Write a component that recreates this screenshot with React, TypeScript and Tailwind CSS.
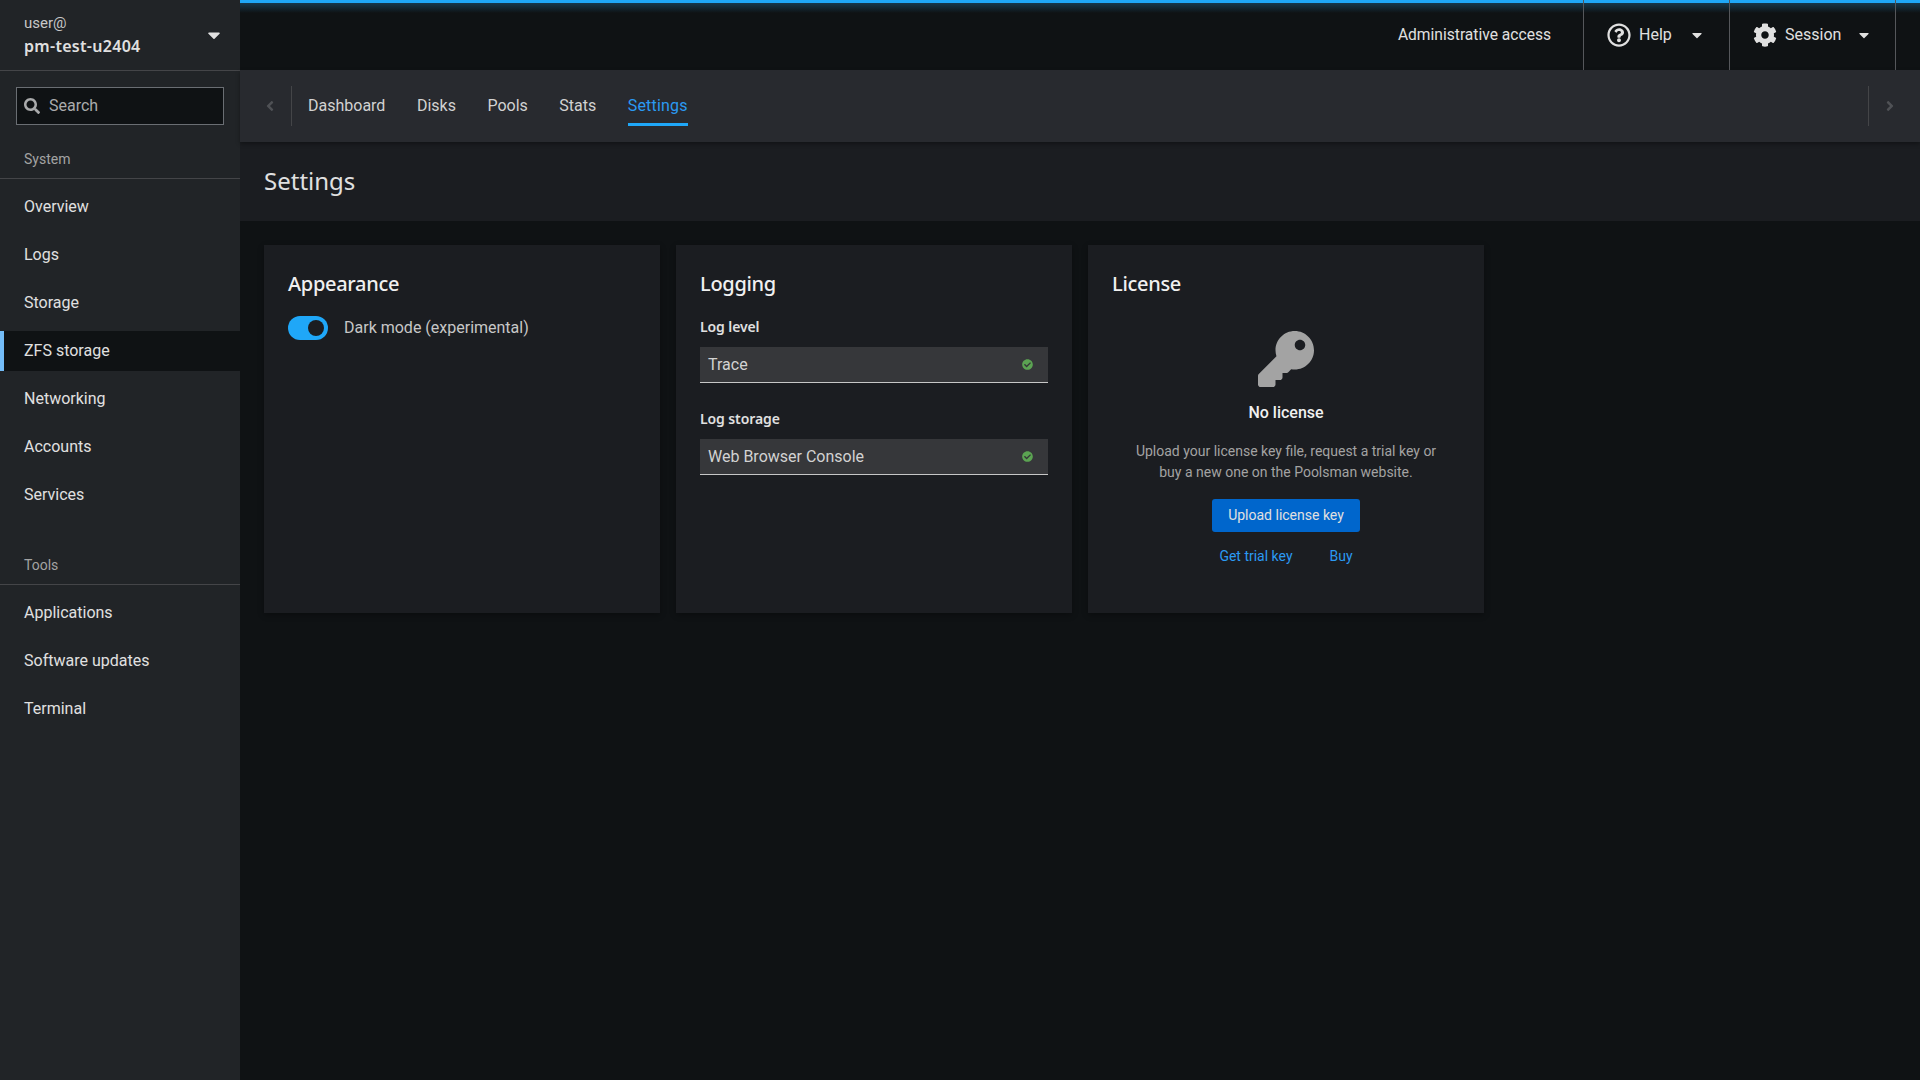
import { FaAngleLeft, FaAngleRight, FaCaretDown, FaCheckCircle, FaCog, FaKey, FaRegQuestionCircle, FaSearch } from "react-icons/fa";

const systemItems = ["Overview", "Logs", "Storage", "ZFS storage", "Networking", "Accounts", "Services"];
const toolItems = ["Applications", "Software updates", "Terminal"];
const tabs = ["Dashboard", "Disks", "Pools", "Stats", "Settings"];

function NavItem({ label }: { label: string }) {
  const active = label === "ZFS storage";
  return (
    <div
      className={
        active
          ? "flex h-10 items-center border-l-4 border-[#73bcf7] bg-[#0f1214] pl-5 text-[#e0e0e0]"
          : "flex h-10 items-center pl-6 text-[#e0e0e0]"
      }
    >
      {label}
    </div>
  );
}

function NavSection({ title, items }: { title: string; items: string[] }) {
  return (
    <div>
      <div className="flex h-[38px] items-center border-b border-[#444548] pb-px pl-6 text-sm text-[#a3a3a3]">{title}</div>
      <div className="flex flex-col gap-2 pt-2">
        {items.map((item) => (
          <NavItem key={item} label={item} />
        ))}
      </div>
    </div>
  );
}

function Sidebar() {
  return (
    <aside className="flex h-full w-60 shrink-0 flex-col bg-[#212427]">
      <div className="flex h-[71px] shrink-0 items-center justify-between border-b border-[#444548] pl-6 pr-4">
        <div>
          <div className="text-[15px] leading-[23px] text-[#c7c7c7]">user@</div>
          <div className="font-['Noto_Sans',sans-serif] font-semibold leading-[23px] tracking-[0.3px] text-[#e0e0e0]">pm-test-u2404</div>
        </div>
        <FaCaretDown className="size-5 text-[#e0e0e0]" />
      </div>
      <div className="mx-4 mt-4 flex h-[38px] items-center gap-[9px] border border-[#6a6e73] bg-[#0f1214] pl-[7px] text-[#aaabac]">
        <FaSearch className="size-4" />
        <span>Search</span>
      </div>
      <div className="mt-4">
        <NavSection title="System" items={systemItems} />
      </div>
      <div className="mt-8">
        <NavSection title="Tools" items={toolItems} />
      </div>
    </aside>
  );
}

function Masthead() {
  return (
    <header className="flex h-[70px] shrink-0 items-stretch justify-end bg-[linear-gradient(#1fa7f8_0,#1fa7f8_3px,#16384d_3px,#0f1214_13px)] pr-[24px] text-[#e0e0e0]">
      <div className="flex items-center pr-8 pt-px text-[15.6px]">Administrative access</div>
      <div className="flex w-[146px] items-center border-l border-[#55575b] pl-[23px]">
        <FaRegQuestionCircle className="size-6" />
        <span className="ml-2 w-[45px]">Help</span>
        <FaCaretDown className="ml-[5px] size-4" />
      </div>
      <div className="flex w-[167px] items-center border-x border-[#55575b] pl-[23px]">
        <FaCog className="size-6" />
        <span className="ml-2 w-[66px]">Session</span>
        <FaCaretDown className="ml-[5px] size-4" />
      </div>
    </header>
  );
}

function TabBar() {
  return (
    <nav className="relative flex h-[72px] shrink-0 items-center justify-between bg-[#282a2f] shadow-[0_2px_4px_rgba(0,0,0,0.35)]">
      <div className="flex items-center">
        <div className="flex h-10 w-[52px] items-center justify-center border-r border-[#444548] pl-2">
          <FaAngleLeft className="size-4 text-[#4f5155]" />
        </div>
        <div className="ml-4 flex gap-[31.5px]">
          {tabs.map((tab) => (
            <div
              key={tab}
              className={
                tab === "Settings"
                  ? "flex h-10 items-center border-b-[3px] border-[#1fa7f8] pt-[3px] tracking-[0.2px] text-[#2b9af3]"
                  : "flex h-10 items-center text-[#d2d2d2]"
              }
            >
              {tab}
            </div>
          ))}
        </div>
      </div>
      <div className="flex h-10 w-[52px] items-center justify-center border-l border-[#444548] pr-[10px]">
        <FaAngleRight className="size-4 text-[#4f5155]" />
      </div>
    </nav>
  );
}

function Card({ title, children }: { title: string; children: React.ReactNode }) {
  return (
    <section className="h-[368px] w-[396px] bg-[#1b1d21] p-6 shadow-[0_2px_6px_rgba(0,0,0,0.3)]">
      <h2 className="font-['Noto_Sans',sans-serif] text-xl font-medium leading-[30px] tracking-[-0.3px] text-[#f0f0f0]">{title}</h2>
      {children}
    </section>
  );
}

function SelectField({ label, value }: { label: string; value: string }) {
  return (
    <div>
      <div className="font-['Noto_Sans',sans-serif] text-sm font-semibold leading-[21px] tracking-[-0.1px] text-[#e0e0e0]">{label}</div>
      <div className="mt-[10px] flex h-9 items-center justify-between border-b border-[#c7c7c7] bg-[#36373a] pl-2 pr-[15px] text-[#d2d2d2]">
        <span>{value}</span>
        <FaCheckCircle className="size-[11px] text-[#5ba352]" />
      </div>
    </div>
  );
}

export default function App() {
  return (
    <div className="flex h-screen w-full overflow-hidden bg-[#0f1214] font-['Roboto',sans-serif] text-base">
      <Sidebar />
      <main className="flex min-w-0 flex-1 flex-col">
        <Masthead />
        <TabBar />
        <div className="flex h-[79px] shrink-0 items-center bg-[#1b1d21] pb-px pl-6 font-['Noto_Sans',sans-serif] text-2xl text-[#e0e0e0]">Settings</div>
        <div className="flex gap-4 p-6">
          <Card title="Appearance">
            <div className="mt-[17px] flex items-center gap-4">
              <div className="flex h-6 w-10 items-center justify-end rounded-full bg-[#1fa7f8] pr-1">
                <div className="size-4 rounded-full bg-[#1b1d21]" />
              </div>
              <span className="text-[#c7c7c7]">Dark mode (experimental)</span>
            </div>
          </Card>
          <Card title="Logging">
            <div className="mt-[17px] flex flex-col gap-[25px]">
              <SelectField label="Log level" value="Trace" />
              <SelectField label="Log storage" value="Web Browser Console" />
            </div>
          </Card>
          <Card title="License">
            <div className="flex flex-col items-center">
              <FaKey className="mt-8 size-14 text-[#a3a3a3]" />
              <div className="mt-[14px] font-medium leading-6 text-[#f0f0f0]">No license</div>
              <p className="mt-4 text-center text-sm leading-[21px] text-[#a3a3a3]">
                Upload your license key file, request a trial key or
                <br />
                buy a new one on the Poolsman website.
              </p>
              <button className="mt-4 h-[33px] w-[148px] rounded-[3px] bg-[#0066cc] pb-px text-sm text-[#e0e0e0]">Upload license key</button>
              <div className="mt-[14px] flex gap-[37px] text-sm leading-[21px] text-[#2b9af3]">
                <span>Get trial key</span>
                <span>Buy</span>
              </div>
            </div>
          </Card>
        </div>
      </main>
    </div>
  );
}
